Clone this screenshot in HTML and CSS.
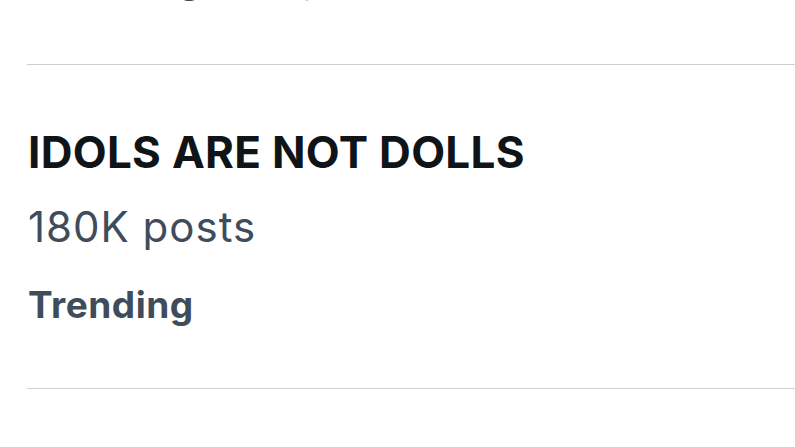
FILE: index.html
```html
<!DOCTYPE html>
<html>
<head>
<meta charset="utf-8">
<link rel="stylesheet" href="styles.css">
</head>
<body>
<div class="feed">
  <div class="prev">
    <div class="prev-text">Trending today</div>
  </div>
  <div class="trend">
    <div class="title">IDOLS ARE NOT DOLLS</div>
    <div class="count">180K posts</div>
    <div class="label">Trending</div>
  </div>
  <div class="next"></div>
</div>
</body>
</html>
```
FILE: styles.css
```css
html, body {
  margin: 0;
  padding: 0;
  background: #ffffff;
}
body {
  width: 795px;
  height: 447px;
  overflow: hidden;
  font-family: Inter, "Noto Sans", sans-serif;
}
.feed {
  padding-left: 27px;
}
.prev {
  height: 64px;
  border-bottom: 1px solid #c9d0d4;
  overflow: hidden;
}
.prev-text {
  font-size: 41px;
  color: #3f4c5c;
  margin-top: -47px;
  padding-left: 1px;
  line-height: 48px;
  letter-spacing: 0.4px;
}
.trend {
  height: 324px;
  border-bottom: 1px solid #c9d0d4;
  padding-left: 1px;
  box-sizing: border-box;
}
.title {
  font-size: 44px;
  font-weight: 700;
  color: #0f1419;
  line-height: 52px;
  padding-top: 61px;
  letter-spacing: 0.3px;
}
.count {
  font-size: 42px;
  color: #3f4c5c;
  line-height: 48px;
  margin-top: 25px;
  letter-spacing: 1px;
}
.label {
  font-size: 37px;
  font-weight: 700;
  color: #3f4c5c;
  line-height: 44px;
  margin-top: 32px;
  letter-spacing: 0.5px;
}
```
